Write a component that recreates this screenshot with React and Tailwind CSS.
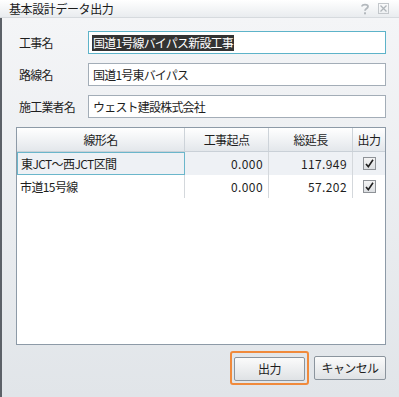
const FONT = { fontFamily: '"Noto Sans CJK JP", "Noto Sans", sans-serif' };

function CheckBox() {
  return (
    <div className="w-[13px] h-[13px] border border-[#8e9297] bg-gradient-to-b from-[#f4f4f4] to-[#dcdfe2] flex items-center justify-center">
      <svg width="11" height="11" viewBox="0 0 11 11">
        <path d="M2 6 L4.3 8.6 L9 1.8" fill="none" stroke="#1f1f1f" strokeWidth="1.6" />
      </svg>
    </div>
  );
}

function Field({ label, value, focused }) {
  return (
    <div className="flex items-center h-[23px]">
      <div className="w-[72px] pl-[3px] text-[12px] tracking-[-0.8px] text-[#1e1e1e]">{label}</div>
      <div
        className={
          "flex-1 h-[23px] flex items-center pl-[3px] bg-white border " +
          (focused ? "border-[#5db3c9]" : "border-[#a3adb7]")
        }
      >
        {focused ? (
          <span className="bg-[#333333] text-white text-[12px] tracking-[-0.8px] leading-[16px] px-[1px]">{value}</span>
        ) : (
          <span className="text-[#1e1e1e] text-[12px] tracking-[-0.8px] px-[1px]">{value}</span>
        )}
      </div>
    </div>
  );
}

const rows = [
  { name: "東JCT～西JCT区間", start: "0.000", len: "117.949" },
  { name: "市道15号線", start: "0.000", len: "57.202" },
];

export default function App() {
  return (
    <div style={FONT} className="w-[399px] h-[397px] flex flex-col bg-white overflow-hidden">
      <div className="h-[18px] shrink-0 flex items-center justify-between pl-[9px] pr-[10px] bg-gradient-to-b from-white to-[#e9ecef] border-b border-[#d6dade]">
        <span className="text-[12px] tracking-[-0.4px] text-[#1b1b1b] leading-[17px]">基本設計データ出力</span>
        <div className="flex items-center gap-[8px]">
          <svg width="10" height="12" viewBox="0 0 10 12">
            <path d="M2 3.5 C2 1 8 1 8 3.5 C8 5.5 5 5.5 5 7.8" fill="none" stroke="#b3b8bd" strokeWidth="1.8" />
            <rect x="4" y="9.3" width="2" height="2" fill="#b3b8bd" />
          </svg>
          <svg width="11" height="11" viewBox="0 0 11 11">
            <rect x="0.5" y="0.5" width="10" height="10" fill="none" stroke="#c3c7cb" />
            <path d="M2.5 2.5 L8.5 8.5 M8.5 2.5 L2.5 8.5" stroke="#b0b5ba" strokeWidth="1.3" />
          </svg>
        </div>
      </div>

      <div className="flex-1 flex flex-col border-l-2 border-[#5c6168] bg-gradient-to-b from-[#f4f5f7] to-[#e1e5e9] pl-[14px] pr-[13px] pt-[13px] pb-[12px]">
        <div className="flex flex-col gap-[9px]">
          <Field label="工事名" value="国道1号線バイパス新設工事" focused />
          <Field label="路線名" value="国道1号東バイパス" />
          <Field label="施工業者名" value="ウェスト建設株式会社" />
        </div>

        <div className="mt-[9px] flex-1 flex flex-col bg-white border border-[#8d9aa7]">
          <div className="grid grid-cols-[168px_84px_84px_1fr] h-[24px] bg-gradient-to-b from-white to-[#e3e7eb] border-b border-[#c9d0d7] text-[12px] tracking-[-0.6px] text-[#1e1e1e]">
            <div className="flex items-center justify-center border-r border-[#cdd3d9]">線形名</div>
            <div className="flex items-center justify-center border-r border-[#cdd3d9]">工事起点</div>
            <div className="flex items-center justify-center border-r border-[#cdd3d9]">総延長</div>
            <div className="flex items-center justify-center">出力</div>
          </div>
          {rows.map((r, i) => (
            <div
              key={r.name}
              className={
                "grid grid-cols-[168px_84px_84px_1fr] h-[23px] text-[12px] text-[#1e1e1e] " +
                (i === 0 ? "bg-[#eef1f5]" : "bg-white")
              }
            >
              <div
                className={
                  "flex items-center pl-[3px] tracking-[-0.6px] " +
                  (i === 0 ? "border border-[#6ab6cb]" : "border-r border-[#d4d8dc]")
                }
              >
                {r.name}
              </div>
              <div className="flex items-center justify-end pr-[5px] border-r border-[#d4d8dc] tracking-[0.4px]">{r.start}</div>
              <div className="flex items-center justify-end pr-[5px] border-r border-[#d4d8dc] tracking-[0.4px]">{r.len}</div>
              <div className="flex items-center justify-center">
                <CheckBox />
              </div>
            </div>
          ))}
        </div>

        <div className="mt-[6px] flex justify-end items-center gap-[5px]">
          <div className="p-[2px] border-2 border-[#f08a3c] rounded-[3px] -mr-[3px]">
            <button className="w-[71px] h-[24px] rounded-[2px] border border-[#8b949d] bg-gradient-to-b from-[#fbfbfb] to-[#dfe2e5] text-[12px] tracking-[-0.6px] text-[#1e1e1e]">
              出力
            </button>
          </div>
          <button className="ml-[3px] w-[72px] h-[24px] rounded-[2px] border border-[#8b949d] bg-gradient-to-b from-[#fbfbfb] to-[#dfe2e5] text-[12px] tracking-[-0.6px] text-[#1e1e1e]">
            キャンセル
          </button>
        </div>
      </div>
    </div>
  );
}
